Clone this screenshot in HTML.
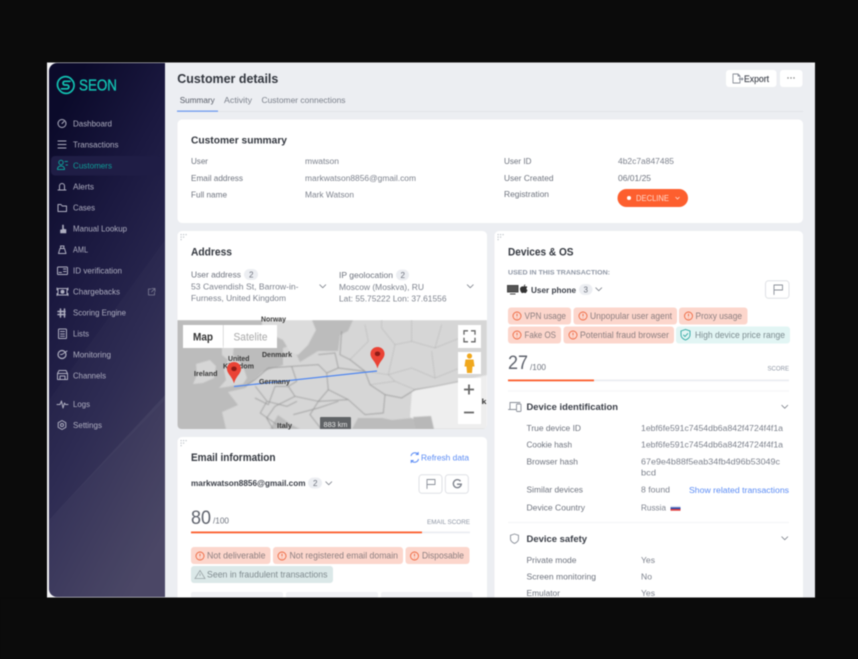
<!DOCTYPE html>
<html><head><meta charset="utf-8"><title>Customer details</title>
<style>
html,body{margin:0;padding:0;background:#0b0b0b;width:858px;height:659px;overflow:hidden}
svg{display:block;filter:blur(.4px)}
text{font-family:"Liberation Sans",sans-serif;font-size:8.6px;fill:#6e737e;white-space:pre}
.n text{fill:#aeaec0;font-size:8.6px}
.h{font-weight:bold;font-size:11px;fill:#33373f}
.v{fill:#7d828d}
.b{font-weight:bold;fill:#3a3e47}
.c{fill:#8c7f80;font-size:8.8px}
.u{fill:#8e96a4;font-size:6.6px}
.m{font-weight:bold;font-size:7.4px;fill:#3a3a3a}
.l{fill:#5b8cf5}
.ic{fill:none;stroke:#aeaec0;stroke-width:1;stroke-linecap:round;stroke-linejoin:round}
.gi{fill:none;stroke:#8a8f99;stroke-width:.9;stroke-linecap:round;stroke-linejoin:round}
</style></head><body>
<svg width="858" height="659" viewBox="0 0 858 659" xmlns="http://www.w3.org/2000/svg">
<defs>
<linearGradient id="sb" x1="0.3" y1="0" x2="0.7" y2="1"><stop offset="0" stop-color="#0b0a2a"/><stop offset=".3" stop-color="#1b1940"/><stop offset=".6" stop-color="#2a2850"/><stop offset="1" stop-color="#423e5e"/></linearGradient>
<clipPath id="sc"><path d="M49 71a8 8 0 0 1 8-8H165V597H57a8 8 0 0 1-8-8Z"/></clipPath>
<clipPath id="mc"><path d="M177.500 320H487V425a4 4 0 0 1-4 4H181.500a4 4 0 0 1-4-4Z"/></clipPath>
<filter id="mb"><feGaussianBlur stdDeviation=".45"/></filter>
<symbol id="w" viewBox="0 0 10 10"><circle cx="5" cy="5" r="4" fill="none" stroke="#ef6a42" stroke-width=".9"/><path d="M5 2.800V5.400M5 6.800V7.300" stroke="#ef6a42" stroke-width=".9" fill="none"/></symbol>
<symbol id="pin" viewBox="0 0 16 24"><path d="M8 .5C3.800.5.500 3.700.500 7.800.500 13 6 15.500 8 23.500 10 15.500 15.500 13 15.500 7.800 15.500 3.700 12.200.5 8 .5Z" fill="#ea4335"/><ellipse cx="8" cy="7.800" rx="2.900" ry="2.500" fill="#8f1c17"/></symbol>
<symbol id="chev" viewBox="0 0 10 6"><path d="M1 1 5 5 9 1" fill="none" stroke="#6e737e" stroke-width="1" stroke-linecap="round" stroke-linejoin="round"/></symbol>
<symbol id="grip" viewBox="0 0 8 7"><g fill="#bfc3ca"><rect x="0" y="0" width="1.200" height="1.200"/><rect x="2.500" y="0" width="1.200" height="1.200"/><rect x="5" y="0" width="1.200" height="1.200"/><rect x="0" y="2.500" width="1.200" height="1.200"/><rect x="2.500" y="2.500" width="1.200" height="1.200"/><rect x="0" y="5" width="1.200" height="1.200"/></g></symbol>
</defs>

<!-- screen frame -->
<rect x="47" y="62.500" width="768" height="535" fill="#f4f4f6"/>
<path d="M165 63H807a8 8 0 0 1 8 8V597.500H165Z" fill="#eceef2"/>
<g clip-path="url(#sc)">
<rect x="49" y="63" width="116" height="534" fill="url(#sb)"/>
<path d="M165 240V400L49 520V400Z" fill="#fff" opacity=".02"/>
<path d="M165 395V597H49V520Z" fill="#fff" opacity=".05"/>
</g>

<!-- logo -->
<g fill="none" stroke="#12c2b2" stroke-width="1.700" stroke-linecap="round">
<path d="M71.500 79.300A8 8 0 0 0 59.500 90"/>
<path d="M60 90.700A8 8 0 0 0 72 80"/>
<path d="M70 81.300H64.500A1.900 1.900 0 0 0 64.500 85H67A1.900 1.900 0 0 1 67 88.800H61.500"/>
</g>
<text x="79" y="90.300" textLength="38" lengthAdjust="spacingAndGlyphs" style="font-size:15.500px;fill:#12c2b2;stroke:#12c2b2;stroke-width:.35">SEON</text>

<!-- sidebar -->
<rect x="51" y="156" width="110" height="19.500" rx="4" fill="#1f1d45"/>
<g class="n">
<text x="73" y="126.500" textLength="39" lengthAdjust="spacingAndGlyphs">Dashboard</text>
<text x="73" y="147.500" textLength="45.500" lengthAdjust="spacingAndGlyphs">Transactions</text>
<text x="73" y="168.500" textLength="39" lengthAdjust="spacingAndGlyphs" style="fill:#0f9c97">Customers</text>
<text x="73" y="189.500" textLength="21" lengthAdjust="spacingAndGlyphs">Alerts</text>
<text x="73" y="210.500" textLength="22" lengthAdjust="spacingAndGlyphs">Cases</text>
<text x="73" y="231.500" textLength="54" lengthAdjust="spacingAndGlyphs">Manual Lookup</text>
<text x="73" y="252.500" textLength="15" lengthAdjust="spacingAndGlyphs">AML</text>
<text x="73" y="273.500" textLength="49" lengthAdjust="spacingAndGlyphs">ID verification</text>
<text x="73" y="294.500" textLength="47" lengthAdjust="spacingAndGlyphs">Chargebacks</text>
<text x="73" y="315.500" textLength="53" lengthAdjust="spacingAndGlyphs">Scoring Engine</text>
<text x="73" y="336.500" textLength="16" lengthAdjust="spacingAndGlyphs">Lists</text>
<text x="73" y="357.500" textLength="38" lengthAdjust="spacingAndGlyphs">Monitoring</text>
<text x="73" y="378.500" textLength="33" lengthAdjust="spacingAndGlyphs">Channels</text>
<text x="73" y="407" textLength="17" lengthAdjust="spacingAndGlyphs">Logs</text>
<text x="73" y="428" textLength="29" lengthAdjust="spacingAndGlyphs">Settings</text>
</g>
<g class="ic">
<circle cx="62" cy="123.500" r="4"/><path d="M62 123.500 64 121.500"/>
<path d="M58 141H66M58 144.500H66M58 148H66"/>
<g style="stroke:#0f9c97"><circle cx="61" cy="162.500" r="2.200"/><path d="M57.500 169.500c0-2.500 1.500-3.500 3.500-3.500s3.500 1 3.500 3.500ZM65 161.500h2.500M66 165h1.500"/></g>
<path d="M59.500 189.500v-3.500a2.500 2.500 0 0 1 5 0v3.500M58 190h8"/>
<path d="M58 204.500h3l1.200 1.500H66.500v5.500H58Z"/>
<path d="M60.500 233v-3l2-.5V225l1 0v4l2.500.5V233Z" fill="#aeaec0" stroke-width=".6"/>
<path d="M58.500 253.500 60 248.500h4.500l1.500 5ZM60.800 248.500 60.500 246h3.500l-.4 2.500"/>
<rect x="57.500" y="267" width="10" height="7.500" rx=".8"/><path d="M63.500 269H66M63.500 271.500H66M59 272.500h2.500"/>
<rect x="58" y="288.500" width="9" height="6.500"/><circle cx="62.500" cy="291.800" r="1.500" fill="#aeaec0"/><path d="M57 288v2M68 288v2M57 293.500v2M68 293.500v2"/>
<path d="M60.500 309v8M64.500 309v8M58 311.500h7M58 314.500h7" stroke-width="1.500"/>
<rect x="58.500" y="329" width="8" height="9.500" rx=".8"/><path d="M60.500 331.500H64.500M60.500 334H64.500M60.500 336.300H64.500"/>
<circle cx="62" cy="354.500" r="4" stroke-width="1.200"/><path d="M62 354.500 67 351M60.500 354.500h1.500"/>
<path d="M57.500 373.500V379.500H67.500V373.500M57.500 373.500 59 370.500H66L67.500 373.500ZM60 379.500v-3.500H65v3.500"/>
<path d="M57 404.500H60L61.500 401 63 408 64.500 403 65.500 404.500H68"/>
<circle cx="62" cy="425" r="1.500"/><path d="M62 420.500 65.800 422.700V427.300L62 429.500 58.200 427.300V422.700Z"/>
<path d="M151 289H148.500V295H154.500V292.500M152 288.500H155V291.500M155 288.500 151.500 292" style="stroke:#7f7f96;stroke-width:.8"/>
</g>

<!-- header -->
<text x="177.300" y="82.800" textLength="101" lengthAdjust="spacingAndGlyphs" style="font-size:13px;font-weight:bold;fill:#33373f">Customer details</text>
<text x="179.700" y="103" textLength="35" lengthAdjust="spacingAndGlyphs" style="fill:#555a65">Summary</text>
<text x="224" y="103" textLength="28" lengthAdjust="spacingAndGlyphs" style="fill:#7b808b">Activity</text>
<text x="261.500" y="103" textLength="84" lengthAdjust="spacingAndGlyphs" style="fill:#7b808b">Customer connections</text>
<rect x="177" y="111" width="626" height=".8" fill="#dfe1e6"/>
<rect x="177" y="110.500" width="41" height="1.300" fill="#6f9cf0"/>

<rect x="726" y="70" width="50.500" height="17" rx="3" fill="#fff"/>
<path d="M733 74H738L740 76V83H733ZM738 74V76H740M739 79H743M741.800 77.800 743 79 741.800 80.200" class="gi"/>
<text x="744" y="81.800" textLength="25" lengthAdjust="spacingAndGlyphs" style="fill:#444851;font-size:8.800px;stroke:#444851;stroke-width:.15">Export</text>
<rect x="780" y="70" width="22.500" height="17" rx="3" fill="#fff"/>
<circle cx="788" cy="78" r=".7" fill="#777"/><circle cx="791" cy="78" r=".7" fill="#777"/><circle cx="794" cy="78" r=".7" fill="#777"/>

<!-- summary card -->
<rect x="177.500" y="119.500" width="625.500" height="103.500" rx="4.500" fill="#fff"/>
<text class="h" x="191" y="143.500" textLength="96" lengthAdjust="spacingAndGlyphs" style="font-size:10.500px">Customer summary</text>
<text x="191" y="164" textLength="17" lengthAdjust="spacingAndGlyphs">User</text>
<text class="v" x="305" y="164" textLength="34" lengthAdjust="spacingAndGlyphs">mwatson</text>
<text x="191" y="180.800" textLength="52" lengthAdjust="spacingAndGlyphs">Email address</text>
<text class="v" x="305" y="180.800" textLength="111" lengthAdjust="spacingAndGlyphs">markwatson8856@gmail.com</text>
<text x="191" y="197.500" textLength="36" lengthAdjust="spacingAndGlyphs">Full name</text>
<text class="v" x="305" y="197.500" textLength="49" lengthAdjust="spacingAndGlyphs">Mark Watson</text>
<text x="504" y="164" textLength="27.500" lengthAdjust="spacingAndGlyphs">User ID</text>
<text class="v" x="618" y="164" textLength="56" lengthAdjust="spacingAndGlyphs">4b2c7a847485</text>
<text x="504" y="180.800" textLength="49.500" lengthAdjust="spacingAndGlyphs">User Created</text>
<text x="618" y="180.800" textLength="33" lengthAdjust="spacingAndGlyphs">06/01/25</text>
<text x="504" y="197" textLength="45" lengthAdjust="spacingAndGlyphs">Registration</text>
<rect x="617.500" y="189" width="70.500" height="18" rx="9" fill="#fd5f2e"/>
<circle cx="629" cy="198" r="2" fill="#fff"/>
<text x="636" y="201" textLength="33" lengthAdjust="spacingAndGlyphs" style="fill:#ffd9cc">DECLINE</text>
<path d="M675.500 197 677.500 199 679.500 197" fill="none" stroke="#ffe0d4" stroke-width=".8"/>

<!-- address card -->
<rect x="177.500" y="231" width="309.500" height="198" rx="4.500" fill="#fff"/>
<use href="#grip" x="180.500" y="234" width="8" height="7"/>
<text class="h" x="191" y="255.500" textLength="41" lengthAdjust="spacingAndGlyphs">Address</text>
<text x="191" y="277.500" textLength="50" lengthAdjust="spacingAndGlyphs">User address</text>
<rect x="244" y="269" width="14" height="11" rx="5.500" fill="#eceef2"/>
<text x="249" y="277.300" textLength="4.500" lengthAdjust="spacingAndGlyphs" style="font-size:8px">2</text>
<text class="v" x="191" y="289.500" textLength="107.500" lengthAdjust="spacingAndGlyphs">53 Cavendish St, Barrow-in-</text>
<text class="v" x="191" y="301" textLength="95" lengthAdjust="spacingAndGlyphs">Furness, United Kingdom</text>
<use href="#chev" x="319" y="284" width="7.500" height="4.500"/>
<text x="339" y="278" textLength="54" lengthAdjust="spacingAndGlyphs">IP geolocation</text>
<rect x="396" y="269.500" width="13" height="11" rx="5.500" fill="#eceef2"/>
<text x="400.500" y="277.800" textLength="4.500" lengthAdjust="spacingAndGlyphs" style="font-size:8px">2</text>
<text class="v" x="339" y="290" textLength="85" lengthAdjust="spacingAndGlyphs">Moscow (Moskva), RU</text>
<text class="v" x="339" y="301.500" textLength="107.500" lengthAdjust="spacingAndGlyphs">Lat: 55.75222 Lon: 37.61556</text>
<use href="#chev" x="466.500" y="284" width="7.500" height="4.500"/>

<!-- map -->
<g clip-path="url(#mc)">
<g filter="url(#mb)">
<rect x="177" y="320" width="310" height="110" fill="#bcbcbc"/>
<g fill="#d6d6d6">
<path d="M487 320H353L348 331 340 335 338 351 318 351 300 362 292 345 283 348 283 365 262 372 245 388 228 392 238 405 222 412 226 429H270L278 415 292 425 300 429H352L358 418 382 418 392 420 413 418 430 429H487Z"/>
<path d="M262 320H312L316 330 308 345 298 355 290 352 283 340 262 330Z" fill="#dcdcdc"/>
<path d="M222 346 234 345 233 355 243 366 247 378 243 384 226 387 219 388 226 380 224 370 228 360 222 355Z"/>
<path d="M196 364 210 360 216 366 214 378 203 383 193 384 197 375Z"/>
</g>
<path d="M487 375 460 381 435 386 412 391 410 417 430 429H487Z" fill="#eeeeee"/>
<path d="M413 417 431 416 434 429H416Z" fill="#b8b8b8"/>
<g transform="translate(255 318) scale(.3333)" fill="none" stroke="#8f8f8f" stroke-width="2.200">
<path d="M110 145 125 190 100 205 120 235 190 250"/>
<path d="M110 145 190 140 215 165 220 215 190 250"/>
<path d="M190 110 240 105 250 150 215 165"/>
<path d="M250 150 330 160 345 200 390 230 385 285 330 290 280 245 220 215"/>
<path d="M260 40 255 110 285 125 330 160"/>
<path d="M280 245 190 250 165 290 200 335"/>
<path d="M120 235 60 265 35 300 55 335"/>
<path d="M100 205 60 205 40 260 0 240"/>
<path d="M115 290 190 270 250 250"/>
<path d="M390 230 440 240 480 215 540 205 615 190"/>
<path d="M-30 205 0 185 40 150 110 145"/>
</g>
<g transform="translate(255 318) scale(.3333)" fill="none" stroke="#a5a5a5" stroke-width="1.600" stroke-dasharray="5 2">
<path d="M330 160 400 170 470 150 540 180 615 150"/>
<path d="M285 125 340 70 330 20M400 170 420 80 470 70 540 90 615 60"/>
<path d="M470 0 470 70M540 90 560 20M420 80 380 30 380 0M540 180 530 100"/>
<path d="M345 200 420 190 480 215M400 170 420 190"/>
</g>
<g transform="translate(177 318) scale(.3333)" fill="none" stroke="#8f8f8f" stroke-width="2.200">
<path d="M235 205 270 250 250 285 300 320"/>
<path d="M270 250 330 265 360 250"/>
</g>
</g>
<path d="M234 386.500 377 371" stroke="#4f86f0" stroke-width="1.200" fill="none"/>
<rect x="320" y="417" width="31" height="13" rx="1" fill="#606366"/>
</g>
<text x="323.500" y="426.800" textLength="24" lengthAdjust="spacingAndGlyphs" style="fill:#e8e8e8;font-size:7.500px">883 km</text>
<text class="m" x="261" y="321.500" textLength="25" lengthAdjust="spacingAndGlyphs">Norway</text>
<text class="m" x="228" y="361" textLength="21.500" lengthAdjust="spacingAndGlyphs">United</text>
<text class="m" x="223" y="368.500" textLength="31" lengthAdjust="spacingAndGlyphs">Kingdom</text>
<text class="m" x="194" y="376" textLength="23.500" lengthAdjust="spacingAndGlyphs">Ireland</text>
<text class="m" x="262" y="357" textLength="30" lengthAdjust="spacingAndGlyphs">Denmark</text>
<text class="m" x="259" y="384" textLength="31" lengthAdjust="spacingAndGlyphs">Germany</text>
<text class="m" x="277" y="428" textLength="15" lengthAdjust="spacingAndGlyphs">Italy</text>
<text class="m" x="481.500" y="404" textLength="5" lengthAdjust="spacingAndGlyphs">k</text>
<use href="#pin" x="226.500" y="361" width="15" height="23.500"/>
<use href="#pin" x="370" y="346" width="15" height="23.500"/>
<rect x="183" y="325" width="40" height="23" fill="#fff"/>
<rect x="223.500" y="325" width="53.500" height="23" fill="#fff"/>
<text x="193" y="340.500" textLength="20" lengthAdjust="spacingAndGlyphs" style="font-size:11px;font-weight:bold;fill:#333">Map</text>
<text x="233.500" y="340.500" textLength="34" lengthAdjust="spacingAndGlyphs" style="font-size:11px;fill:#a8a8a8">Satelite</text>
<rect x="458" y="325" width="23" height="23" fill="#fff"/>
<path d="M464 335V331H468M471 331H475V335M475 338V342H471M468 342H464V338" transform="translate(0 -.2)" fill="none" stroke="#666" stroke-width="1.300"/>
<rect x="458" y="352" width="23" height="22" fill="#fff"/>
<g fill="#f0a81e"><circle cx="469.500" cy="356" r="2.600"/><path d="M465.500 359.500h8l1 7h-2l-.5 6.500h-5l-.5-6.500h-2Z"/></g>
<rect x="458" y="378" width="23" height="46" fill="#fff"/>
<path d="M464 389.500H474M469 384.500V394.500M464 412.500H474" stroke="#666" stroke-width="1.800"/>

<!-- email card -->
<path d="M177.500 441.500a4.500 4.500 0 0 1 4.500-4.500H482.500a4.500 4.500 0 0 1 4.500 4.500V597.500H177.500Z" fill="#fff"/>
<use href="#grip" x="180.500" y="440" width="8" height="7"/>
<text class="h" x="191" y="461" textLength="84.500" lengthAdjust="spacingAndGlyphs">Email information</text>
<path d="M411 456a4 4 0 0 1 7-1.800M418.500 459a4 4 0 0 1-7 1.800M418.200 452v2.500H415.700M411.200 463V460.500H413.700" fill="none" stroke="#5b8cf5" stroke-width="1"/>
<text class="l" x="421" y="460.500" textLength="48" lengthAdjust="spacingAndGlyphs">Refresh data</text>
<text class="b" x="191" y="486" textLength="114.500" lengthAdjust="spacingAndGlyphs">markwatson8856@gmail.com</text>
<rect x="308" y="477.500" width="14" height="11" rx="5.500" fill="#eceef2"/>
<text x="313" y="485.800" textLength="4.500" lengthAdjust="spacingAndGlyphs" style="font-size:8px">2</text>
<use href="#chev" x="325" y="481" width="7.500" height="4.500"/>
<rect x="419" y="474.800" width="23" height="18.500" rx="3" fill="#fff" stroke="#dfe1e5"/>
<path d="M427 488.500V479.500H435V484.500H427" class="gi"/>
<rect x="445.300" y="474.800" width="23" height="18.500" rx="3" fill="#fff" stroke="#dfe1e5"/>
<path d="M460.500 481.200a4 4 0 1 0 .8 3H457" fill="none" stroke="#7c818b" stroke-width="1.300"/>
<text x="191" y="523.800" textLength="20" lengthAdjust="spacingAndGlyphs" style="font-size:19px;fill:#5f636d">80</text>
<text x="213" y="523.500" textLength="16" lengthAdjust="spacingAndGlyphs">/100</text>
<text class="u" x="427" y="524" textLength="43" lengthAdjust="spacingAndGlyphs">EMAIL SCORE</text>
<rect x="191" y="531.500" width="279" height="1.800" fill="#eceef2"/>
<rect x="191" y="531.500" width="231" height="1.800" fill="#fd5f2e"/>
<g fill="#fcd6cc">
<rect x="191" y="547" width="79.500" height="17" rx="3"/>
<rect x="273" y="547" width="130" height="17" rx="3"/>
<rect x="405.500" y="547" width="64" height="17" rx="3"/>
</g>
<rect x="191" y="566" width="142" height="17" rx="3" fill="#dbe8e8"/>
<use href="#w" x="195" y="551" width="10" height="10"/>
<use href="#w" x="277" y="551" width="10" height="10"/>
<use href="#w" x="409.500" y="551" width="10" height="10"/>
<path d="M200 570.500 205 578.500H195ZM200 573.500V576" fill="none" stroke="#9aa3a6" stroke-width=".8"/>
<text class="c" x="207" y="558.500" textLength="58.500" lengthAdjust="spacingAndGlyphs">Not deliverable</text>
<text class="c" x="289.500" y="558.500" textLength="108.500" lengthAdjust="spacingAndGlyphs">Not registered email domain</text>
<text class="c" x="422" y="558.500" textLength="42" lengthAdjust="spacingAndGlyphs">Disposable</text>
<text class="c" x="207" y="577.500" textLength="120.500" lengthAdjust="spacingAndGlyphs" style="fill:#7f8a8e">Seen in fraudulent transactions</text>
<rect x="191" y="592" width="92" height="6" rx="2" fill="#f1f2f5"/>
<rect x="286" y="592" width="92" height="6" rx="2" fill="#f1f2f5"/>
<rect x="381" y="592" width="91.500" height="6" rx="2" fill="#f1f2f5"/>

<!-- devices card -->
<path d="M494.500 235.500a4.500 4.500 0 0 1 4.500-4.500H798.500a4.500 4.500 0 0 1 4.500 4.500V597.500H494.500Z" fill="#fff"/>
<use href="#grip" x="497.500" y="234" width="8" height="7"/>
<text class="h" x="508" y="255.500" textLength="65.500" lengthAdjust="spacingAndGlyphs">Devices &amp; OS</text>
<text class="u" x="508" y="274.500" textLength="102" lengthAdjust="spacingAndGlyphs" style="font-weight:bold">USED IN THIS TRANSACTION:</text>
<path d="M507.500 285.500h10.500v6.500h-10.500ZM510 294h5.500" fill="#555" stroke="#444" stroke-width="1"/>
<path d="M523.500 286.500c1-.5 1.800-.5 2.300 0 .7-.2 1.300.1 1.500.6-1.200.8-1 2.500.2 3-.5 1.300-1.300 3-2.200 3-.6 0-.9-.3-1.500-.3s-1 .3-1.500.3c-1 0-2.300-2.500-2.300-4.200 0-1.800 2-3 3.500-2.400ZM523.800 286.300c0-1 .6-1.800 1.500-1.900 0 1-.6 1.800-1.500 1.900Z" fill="#333"/>
<text class="b" x="531" y="292.800" textLength="45" lengthAdjust="spacingAndGlyphs">User phone</text>
<rect x="579" y="284" width="13.500" height="11" rx="5.500" fill="#eceef2"/>
<text x="583.500" y="292.300" textLength="4.500" lengthAdjust="spacingAndGlyphs" style="font-size:8px">3</text>
<use href="#chev" x="595" y="287" width="7.500" height="4.500"/>
<rect x="765.500" y="280.800" width="23.500" height="17.500" rx="3" fill="#fff" stroke="#dfe1e5"/>
<path d="M774 294.500V285H782.500V290H774" class="gi"/>
<g fill="#fcd6cc">
<rect x="508" y="307.500" width="63" height="17" rx="3"/>
<rect x="573.500" y="307.500" width="103.500" height="17" rx="3"/>
<rect x="679" y="307.500" width="68.500" height="17" rx="3"/>
<rect x="508" y="326.500" width="53" height="17" rx="3"/>
<rect x="563.500" y="326.500" width="110.500" height="17" rx="3"/>
</g>
<rect x="676" y="326.500" width="114" height="17" rx="3" fill="#e2f5f4"/>
<use href="#w" x="512" y="311" width="10" height="10"/>
<use href="#w" x="578" y="311" width="10" height="10"/>
<use href="#w" x="683.500" y="311" width="10" height="10"/>
<use href="#w" x="512" y="330" width="10" height="10"/>
<use href="#w" x="568" y="330" width="10" height="10"/>
<path d="M681 331 685.500 329.500 690 331V335c0 2.500-2 4-4.500 5-2.500-1-4.500-2.500-4.500-5ZM683.300 334.800 685 336.500 688 333.300" fill="none" stroke="#2ca7a0" stroke-width=".9"/>
<text class="c" x="524.500" y="319" textLength="41.500" lengthAdjust="spacingAndGlyphs">VPN usage</text>
<text class="c" x="590" y="319" textLength="82" lengthAdjust="spacingAndGlyphs">Unpopular user agent</text>
<text class="c" x="695.500" y="319" textLength="46.500" lengthAdjust="spacingAndGlyphs">Proxy usage</text>
<text class="c" x="524.500" y="338" textLength="31.500" lengthAdjust="spacingAndGlyphs">Fake OS</text>
<text class="c" x="580" y="338" textLength="89" lengthAdjust="spacingAndGlyphs">Potential fraud browser</text>
<text class="c" x="695" y="338" textLength="90" lengthAdjust="spacingAndGlyphs" style="fill:#7d8c90">High device price range</text>
<text x="508" y="369" textLength="20" lengthAdjust="spacingAndGlyphs" style="font-size:19px;fill:#5f636d">27</text>
<text x="530" y="370" textLength="16" lengthAdjust="spacingAndGlyphs">/100</text>
<text class="u" x="767.500" y="370.500" textLength="21.500" lengthAdjust="spacingAndGlyphs">SCORE</text>
<rect x="508" y="379.500" width="281" height="1.800" fill="#eceef2"/>
<rect x="508" y="379.500" width="86" height="1.800" fill="#fd5f2e"/>
<rect x="508" y="390.500" width="281" height="1" fill="#f3f4f6"/>

<path d="M510 409V402.500H520M508.500 409.500H516" class="gi"/><rect x="516.500" y="404" width="4.500" height="7.500" rx=".7" class="gi"/>
<text class="b" x="526.500" y="410" textLength="91.500" lengthAdjust="spacingAndGlyphs" style="font-size:9.500px">Device identification</text>
<use href="#chev" x="781" y="404.500" width="7.500" height="4.500"/>
<text x="526.500" y="431" textLength="54.500" lengthAdjust="spacingAndGlyphs">True device ID</text>
<text class="v" x="641" y="431" textLength="142" lengthAdjust="spacingAndGlyphs">1ebf6fe591c7454db6a842f4724f4f1a</text>
<text x="526.500" y="447.500" textLength="45.500" lengthAdjust="spacingAndGlyphs">Cookie hash</text>
<text class="v" x="641" y="447.500" textLength="142" lengthAdjust="spacingAndGlyphs">1ebf6fe591c7454db6a842f4724f4f1a</text>
<text x="526.500" y="464.500" textLength="51.500" lengthAdjust="spacingAndGlyphs">Browser hash</text>
<text class="v" x="641" y="464.500" textLength="139" lengthAdjust="spacingAndGlyphs">67e9e4b88f5eab34fb4d96b53049c</text>
<text class="v" x="641" y="475.500" textLength="15" lengthAdjust="spacingAndGlyphs">bcd</text>
<text x="526.500" y="492.500" textLength="56.500" lengthAdjust="spacingAndGlyphs">Similar devices</text>
<text class="v" x="641" y="492.500" textLength="29" lengthAdjust="spacingAndGlyphs">8 found</text>
<text class="l" x="689" y="493" textLength="100" lengthAdjust="spacingAndGlyphs">Show related transactions</text>
<text x="526.500" y="510.500" textLength="58.500" lengthAdjust="spacingAndGlyphs">Device Country</text>
<text class="v" x="641" y="510.500" textLength="25" lengthAdjust="spacingAndGlyphs">Russia</text>
<rect x="670.500" y="506" width="10" height="1.600" fill="#dfe3f0"/><rect x="670.500" y="507.300" width="10" height="1.700" fill="#2d4fb0"/><rect x="670.500" y="509" width="10" height="1.700" fill="#e03a3a"/>
<rect x="508" y="522" width="281" height="1" fill="#f3f4f6"/>
<path d="M514.500 534 518.500 535.300V539c0 2.300-1.800 3.500-4 4.400-2.200-.9-4-2.100-4-4.400V535.300Z" class="gi"/>
<text class="b" x="526.500" y="542" textLength="60.500" lengthAdjust="spacingAndGlyphs" style="font-size:9.500px">Device safety</text>
<use href="#chev" x="781" y="536" width="7.500" height="4.500"/>
<text x="526.500" y="563" textLength="50" lengthAdjust="spacingAndGlyphs">Private mode</text>
<text class="v" x="641" y="563" textLength="14" lengthAdjust="spacingAndGlyphs">Yes</text>
<text x="526.500" y="579.500" textLength="69.500" lengthAdjust="spacingAndGlyphs">Screen monitoring</text>
<text class="v" x="641" y="579.500" textLength="11" lengthAdjust="spacingAndGlyphs">No</text>
<text x="526.500" y="596" textLength="33.500" lengthAdjust="spacingAndGlyphs">Emulator</text>
<text class="v" x="641" y="596" textLength="14" lengthAdjust="spacingAndGlyphs">Yes</text>

<!-- clip bottom -->
<rect x="0" y="597.500" width="858" height="62" fill="#0b0b0b"/>
</svg>
</body></html>
